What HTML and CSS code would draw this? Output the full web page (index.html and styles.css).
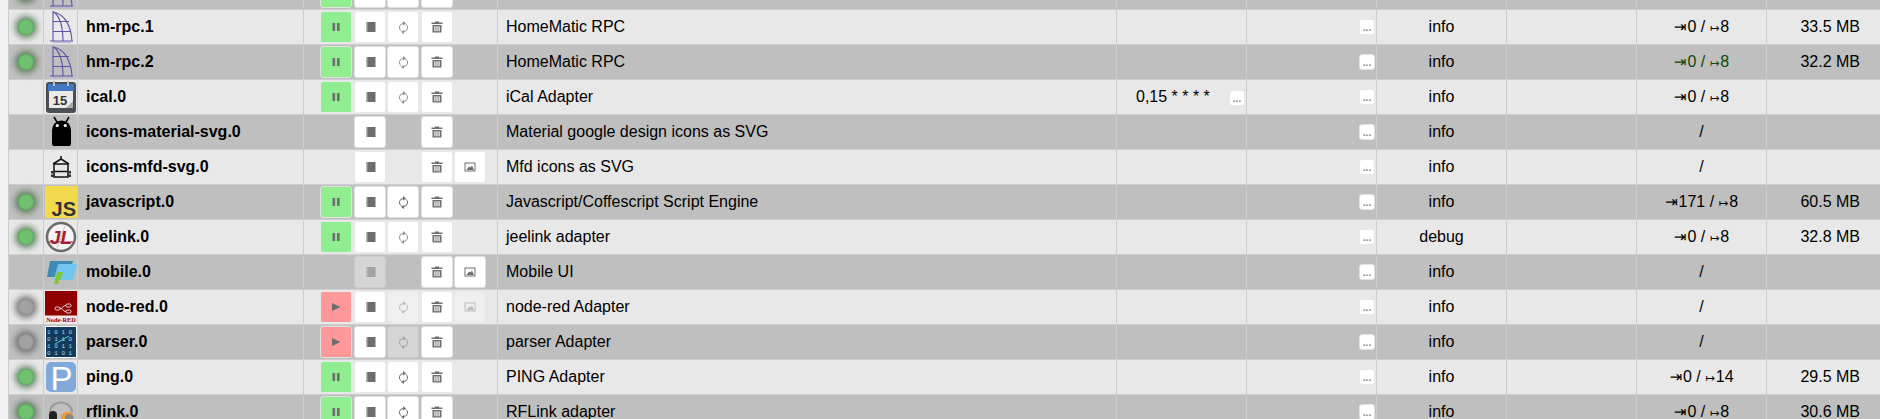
FILE: index.html
```html
<!DOCTYPE html>
<html lang="en">
<head>
<meta charset="utf-8">
<title>Instances</title>
<link rel="stylesheet" href="styles.css">
</head>
<body>
<svg class="defs" width="0" height="0" aria-hidden="true">
  <symbol id="pause" viewBox="0 0 16 16"><path d="M4.500 4h2.600v8H4.500zM9 4h2.600v8H9z"/></symbol>
  <symbol id="play" viewBox="0 0 16 16"><path d="M4 4l8.500 4L4 12z"/></symbol>
  <symbol id="note" viewBox="0 0 16 16"><path d="M5.500 3H13.500v10H5.500zM4 3.500h1.500v1H4zM4 5.500h1.500v1H4zM4 7.500h1.500v1H4zM4 9.500h1.500v1H4zM4 11.500h1.500v1H4z"/></symbol>
  <symbol id="sync" viewBox="0 0 16 16"><path fill="none" stroke="currentColor" stroke-width="1" d="M8 4.500A4 4 0 0 0 6.500 12M9 12.500A4 4 0 0 0 10.500 5"/><path d="M8 2l3 2.500L8 6.500zM9 11l-3 2 3 2z"/></symbol>
  <symbol id="trash" viewBox="0 0 16 16"><path d="M6 2.500h4v1h3.500V5h-11V3.500H6zM3.500 6h9v7.500h-9zM5.300 7.300v5h1.200v-5zM7.400 7.300v5h1.200v-5zM9.500 7.300v5h1.200v-5z" fill-rule="evenodd"/></symbol>
  <symbol id="image" viewBox="0 0 16 16"><path fill-rule="evenodd" d="M2.500 3.500h11v9h-11zM3.500 4.500v7h9v-7z"/><path d="M4.500 11l2.500-3.500 1.500 1L10 6.500l2 4.500z"/></symbol>
  <symbol id="hm" viewBox="0 0 32 32"><g fill="none" stroke="#5b53a8" stroke-width="1.100"><path d="M8 0v30M9 1c6 5 9 14 9 29M8 1c12 2 18 14 19 29M8 10.500h16M8 20.500h18M5 30h23"/></g><path d="M8 31h18v1H8z" fill="#b9b7d8"/></symbol>
  <symbol id="android" viewBox="0 0 32 32"><path d="M7 14a9.500 9.500 0 0 1 19 0v14a2 2 0 0 1-2 2H9a2 2 0 0 1-2-2z"/><path d="M9 1l3 5M24 1l-3 5" stroke="#000" stroke-width="1.500"/><circle cx="12.300" cy="9.500" r="1.600" fill="#fff"/><circle cx="20.300" cy="9.500" r="1.600" fill="#fff"/></symbol>
  <symbol id="mfd" viewBox="0 0 32 32"><path fill="none" stroke="#111" stroke-width="1.500" d="M9 13h14v13H9zM8 13l8-5 8 5M16 5v3M9 20.500h14"/><path d="M6 20h4v2.500H6zM22 20h4v2.500h-4zM6 23.500h4V26H6zM22 23.500h4V26h-4z" fill="#333"/></symbol>
  <symbol id="mobile" viewBox="0 0 32 32"><path fill="#3e8cb4" d="M5 5h23l-3 10-12 1-1 5H2z"/><path fill="#72c5ee" d="M13 8h19l-4 16H9z"/><path fill="#7fc92e" d="M12 16h6l-3 8h-1l-1 4H9l2-7z"/></symbol>
  <symbol id="rflink" viewBox="0 0 32 32"><path fill="none" stroke="#9a9a9a" stroke-width="2" d="M5 17C5 3 27 3 27 17"/><rect x="4" y="15" width="8" height="16" rx="4" fill="#222"/><rect x="16" y="16" width="13" height="15" rx="6" fill="#ee9a33"/><rect x="20" y="18" width="8" height="11" rx="4" fill="#888"/></symbol>
</svg>

<main class="list">

<div class="row">
  <div class="cell"><span class="led on"></span></div>
  <div class="cell icon"><svg class="logo" viewBox="0 0 32 32"><use href="#hm"/></svg></div>
  <div class="cell name">hm-rpc.0</div>
  <div class="cell btns"><button class="b go"><svg class="i"><use href="#pause"/></svg></button><button class="b"><svg class="i"><use href="#note"/></svg></button><button class="b"><svg class="i soft"><use href="#sync"/></svg></button><button class="b"><svg class="i"><use href="#trash"/></svg></button></div>
  <div class="cell text">HomeMatic RPC</div>
  <div class="cell"></div>
  <div class="cell end"><button class="more">...</button></div>
  <div class="cell mid">info</div>
  <div class="cell"></div>
  <div class="cell mid"><span><span class="ar">⇥</span>0 / <span class="ar ar2">↦</span>8</span></div>
  <div class="cell mem">32.9 MB</div>
</div>

<div class="row">
  <div class="cell"><span class="led on"></span></div>
  <div class="cell icon"><svg class="logo" viewBox="0 0 32 32"><use href="#hm"/></svg></div>
  <div class="cell name">hm-rpc.1</div>
  <div class="cell btns"><button class="b go"><svg class="i"><use href="#pause"/></svg></button><button class="b"><svg class="i"><use href="#note"/></svg></button><button class="b"><svg class="i soft"><use href="#sync"/></svg></button><button class="b"><svg class="i"><use href="#trash"/></svg></button></div>
  <div class="cell text">HomeMatic RPC</div>
  <div class="cell"></div>
  <div class="cell end"><button class="more">...</button></div>
  <div class="cell mid">info</div>
  <div class="cell"></div>
  <div class="cell mid"><span><span class="ar">⇥</span>0 / <span class="ar ar2">↦</span>8</span></div>
  <div class="cell mem">33.5 MB</div>
</div>

<div class="row">
  <div class="cell"><span class="led on"></span></div>
  <div class="cell icon"><svg class="logo" viewBox="0 0 32 32"><use href="#hm"/></svg></div>
  <div class="cell name">hm-rpc.2</div>
  <div class="cell btns"><button class="b go"><svg class="i"><use href="#pause"/></svg></button><button class="b"><svg class="i"><use href="#note"/></svg></button><button class="b"><svg class="i soft"><use href="#sync"/></svg></button><button class="b"><svg class="i"><use href="#trash"/></svg></button></div>
  <div class="cell text">HomeMatic RPC</div>
  <div class="cell"></div>
  <div class="cell end"><button class="more">...</button></div>
  <div class="cell mid">info</div>
  <div class="cell"></div>
  <div class="cell mid green"><span><span class="ar">⇥</span>0 / <span class="ar ar2">↦</span>8</span></div>
  <div class="cell mem">32.2 MB</div>
</div>

<div class="row">
  <div class="cell"></div>
  <div class="cell icon"><svg class="logo" viewBox="0 0 32 32"><rect x="1" y="1" width="30" height="31" rx="3" fill="#4a4f55"/><rect x="3" y="3" width="26" height="7" fill="#3f78c4"/><rect x="4" y="10" width="24" height="17" fill="#eceae6"/><path d="M8 0h2v5H8zM22 0h2v5h-2z" fill="#bbb"/><path d="M21 27l7-7v7z" fill="#aaa"/><text x="15" y="24" class="t-cal">15</text></svg></div>
  <div class="cell name">ical.0</div>
  <div class="cell btns"><button class="b go"><svg class="i"><use href="#pause"/></svg></button><button class="b"><svg class="i"><use href="#note"/></svg></button><button class="b"><svg class="i soft"><use href="#sync"/></svg></button><button class="b"><svg class="i"><use href="#trash"/></svg></button></div>
  <div class="cell text">iCal Adapter</div>
  <div class="cell cron"><span>0,15 * * * *</span><button class="more">...</button></div>
  <div class="cell end"><button class="more">...</button></div>
  <div class="cell mid">info</div>
  <div class="cell"></div>
  <div class="cell mid"><span><span class="ar">⇥</span>0 / <span class="ar ar2">↦</span>8</span></div>
  <div class="cell mem"></div>
</div>

<div class="row">
  <div class="cell"></div>
  <div class="cell icon"><svg class="logo" viewBox="0 0 32 32"><use href="#android"/></svg></div>
  <div class="cell name">icons-material-svg.0</div>
  <div class="cell btns"><span class="gap"></span><button class="b"><svg class="i"><use href="#note"/></svg></button><span class="gap"></span><button class="b"><svg class="i"><use href="#trash"/></svg></button></div>
  <div class="cell text">Material google design icons as SVG</div>
  <div class="cell"></div>
  <div class="cell end"><button class="more">...</button></div>
  <div class="cell mid">info</div>
  <div class="cell"></div>
  <div class="cell mid">/</div>
  <div class="cell mem"></div>
</div>

<div class="row">
  <div class="cell"></div>
  <div class="cell icon"><svg class="logo" viewBox="0 0 32 32"><use href="#mfd"/></svg></div>
  <div class="cell name">icons-mfd-svg.0</div>
  <div class="cell btns"><span class="gap"></span><button class="b"><svg class="i"><use href="#note"/></svg></button><span class="gap"></span><button class="b"><svg class="i"><use href="#trash"/></svg></button><button class="b"><svg class="i"><use href="#image"/></svg></button></div>
  <div class="cell text">Mfd icons as SVG</div>
  <div class="cell"></div>
  <div class="cell end"><button class="more">...</button></div>
  <div class="cell mid">info</div>
  <div class="cell"></div>
  <div class="cell mid">/</div>
  <div class="cell mem"></div>
</div>

<div class="row">
  <div class="cell"><span class="led on"></span></div>
  <div class="cell icon"><svg class="logo" viewBox="0 0 32 32"><path fill="#f3d94e" d="M0 0h32v32H0z"/><text x="31" y="30" class="t-js">JS</text></svg></div>
  <div class="cell name">javascript.0</div>
  <div class="cell btns"><button class="b go"><svg class="i"><use href="#pause"/></svg></button><button class="b"><svg class="i"><use href="#note"/></svg></button><button class="b"><svg class="i"><use href="#sync"/></svg></button><button class="b"><svg class="i"><use href="#trash"/></svg></button></div>
  <div class="cell text">Javascript/Coffescript Script Engine</div>
  <div class="cell"></div>
  <div class="cell end"><button class="more">...</button></div>
  <div class="cell mid">info</div>
  <div class="cell"></div>
  <div class="cell mid"><span><span class="ar">⇥</span>171 / <span class="ar ar2">↦</span>8</span></div>
  <div class="cell mem">60.5 MB</div>
</div>

<div class="row">
  <div class="cell"><span class="led on"></span></div>
  <div class="cell icon"><svg class="logo" viewBox="0 0 32 32"><circle cx="16" cy="16" r="14" fill="#f4f4f4" stroke="#6b6b6b" stroke-width="2.500"/><path d="M4 21h24" stroke="#9a2030" stroke-width="1"/><path d="M12 27L20 5" stroke="#bbb" stroke-width=".8"/><text x="16" y="23" class="t-jl">JL</text></svg></div>
  <div class="cell name">jeelink.0</div>
  <div class="cell btns"><button class="b go"><svg class="i"><use href="#pause"/></svg></button><button class="b"><svg class="i"><use href="#note"/></svg></button><button class="b"><svg class="i soft"><use href="#sync"/></svg></button><button class="b"><svg class="i"><use href="#trash"/></svg></button></div>
  <div class="cell text">jeelink adapter</div>
  <div class="cell"></div>
  <div class="cell end"><button class="more">...</button></div>
  <div class="cell mid">debug</div>
  <div class="cell"></div>
  <div class="cell mid"><span><span class="ar">⇥</span>0 / <span class="ar ar2">↦</span>8</span></div>
  <div class="cell mem">32.8 MB</div>
</div>

<div class="row">
  <div class="cell"></div>
  <div class="cell icon"><svg class="logo" viewBox="0 0 32 32"><use href="#mobile"/></svg></div>
  <div class="cell name">mobile.0</div>
  <div class="cell btns"><span class="gap"></span><button class="b off"><svg class="i"><use href="#note"/></svg></button><span class="gap"></span><button class="b"><svg class="i"><use href="#trash"/></svg></button><button class="b"><svg class="i"><use href="#image"/></svg></button></div>
  <div class="cell text">Mobile UI</div>
  <div class="cell"></div>
  <div class="cell end"><button class="more">...</button></div>
  <div class="cell mid">info</div>
  <div class="cell"></div>
  <div class="cell mid">/</div>
  <div class="cell mem"></div>
</div>

<div class="row">
  <div class="cell"><span class="led"></span></div>
  <div class="cell icon"><svg class="logo" viewBox="0 0 32 32"><path fill="#8f0000" d="M0 0h32v32H0z"/><path fill="#f3e6e6" d="M0 24.500h32V32H0z"/><g fill="none" stroke="#fff" stroke-width=".8"><rect x="10" y="16" width="5" height="3" rx="1.200"/><rect x="21" y="13" width="5" height="3" rx="1.200"/><rect x="21" y="19" width="5" height="3" rx="1.200"/><path d="M15 17.500c4 0 2-3 6-3M15 17.500c4 0 2 3 6 3"/></g><text x="16" y="30.500" class="t-nr">Node-RED</text></svg></div>
  <div class="cell name">node-red.0</div>
  <div class="cell btns"><button class="b stop"><svg class="i"><use href="#play"/></svg></button><button class="b"><svg class="i"><use href="#note"/></svg></button><button class="b off"><svg class="i"><use href="#sync"/></svg></button><button class="b"><svg class="i"><use href="#trash"/></svg></button><button class="b off"><svg class="i"><use href="#image"/></svg></button></div>
  <div class="cell text">node-red Adapter</div>
  <div class="cell"></div>
  <div class="cell end"><button class="more">...</button></div>
  <div class="cell mid">info</div>
  <div class="cell"></div>
  <div class="cell mid">/</div>
  <div class="cell mem"></div>
</div>

<div class="row">
  <div class="cell"><span class="led"></span></div>
  <div class="cell icon"><svg class="logo" viewBox="0 0 32 32"><path fill="#123a5c" stroke="#fff" d="M.5.500h31v31H.5z"/><text x="2" y="8" class="t-bin">1 0 1 0 0</text><text x="2" y="15" class="t-bin">0 1 1 0 1</text><text x="2" y="22" class="t-bin">1 0 1 1 0</text><text x="2" y="29" class="t-bin">0 1 0 1 1</text><path d="M10 18l14-8" stroke="#4fd6d0" stroke-width="1"/></svg></div>
  <div class="cell name">parser.0</div>
  <div class="cell btns"><button class="b stop"><svg class="i"><use href="#play"/></svg></button><button class="b"><svg class="i"><use href="#note"/></svg></button><button class="b off"><svg class="i"><use href="#sync"/></svg></button><button class="b"><svg class="i"><use href="#trash"/></svg></button></div>
  <div class="cell text">parser Adapter</div>
  <div class="cell"></div>
  <div class="cell end"><button class="more">...</button></div>
  <div class="cell mid">info</div>
  <div class="cell"></div>
  <div class="cell mid">/</div>
  <div class="cell mem"></div>
</div>

<div class="row">
  <div class="cell"><span class="led on"></span></div>
  <div class="cell icon"><svg class="logo" viewBox="0 0 32 32"><rect x="1" y="1" width="30" height="30" rx="5" fill="#82a9db"/><text x="5.500" y="29" class="t-p">P</text></svg></div>
  <div class="cell name">ping.0</div>
  <div class="cell btns"><button class="b go"><svg class="i"><use href="#pause"/></svg></button><button class="b"><svg class="i"><use href="#note"/></svg></button><button class="b"><svg class="i"><use href="#sync"/></svg></button><button class="b"><svg class="i"><use href="#trash"/></svg></button></div>
  <div class="cell text">PING Adapter</div>
  <div class="cell"></div>
  <div class="cell end"><button class="more">...</button></div>
  <div class="cell mid">info</div>
  <div class="cell"></div>
  <div class="cell mid"><span><span class="ar">⇥</span>0 / <span class="ar ar2">↦</span>14</span></div>
  <div class="cell mem">29.5 MB</div>
</div>

<div class="row">
  <div class="cell"><span class="led on"></span></div>
  <div class="cell icon"><svg class="logo" viewBox="0 0 32 32"><use href="#rflink"/></svg></div>
  <div class="cell name">rflink.0</div>
  <div class="cell btns"><button class="b go"><svg class="i"><use href="#pause"/></svg></button><button class="b"><svg class="i"><use href="#note"/></svg></button><button class="b"><svg class="i"><use href="#sync"/></svg></button><button class="b"><svg class="i"><use href="#trash"/></svg></button></div>
  <div class="cell text">RFLink adapter</div>
  <div class="cell"></div>
  <div class="cell end"><button class="more">...</button></div>
  <div class="cell mid">info</div>
  <div class="cell"></div>
  <div class="cell mid"><span><span class="ar">⇥</span>0 / <span class="ar ar2">↦</span>8</span></div>
  <div class="cell mem">30.6 MB</div>
</div>

</main>
</body>
</html>
```

FILE: styles.css
```css
html, body {
  margin: 0;
  height: 419px;
  overflow: hidden;
  background: #f2f2f2;
}
body {
  padding-left: 8px;
  font-family: "Liberation Sans", Arial, sans-serif;
  font-size: 16px;
  color: #000;
}
.defs {
  display: block;
  height: 0;
}
/* the list is scrolled: its first row is cut by the top of the window */
.list {
  margin-top: -25px;
  border-left: 1px solid #ccc;
}
.row {
  display: grid;
  grid-template-columns: 35px 34px 226px 194px 619px 130px 130px 130px 130px 130px 114px;
  height: 35px;
  box-sizing: border-box;
  border-bottom: 1px solid #cfcfcf;
  background: #e8e8e8;
}
.row:nth-child(odd) {
  background: #bfbfbf;
}
.cell {
  display: flex;
  align-items: center;
  box-sizing: border-box;
  border-right: 1px solid #ccc;
  min-width: 0;
  white-space: nowrap;
}
.cell:first-child {
  justify-content: center;
}
.cell:last-child {
  border-right: 0;
}
.icon {
  padding-left: 1px;
  align-items: flex-start;
  padding-top: 1px;
}
.logo {
  display: block;
  flex: none;
  width: 32px;
  height: 32px;
}
.name {
  padding-left: 8px;
  font-weight: bold;
}
.btns {
  padding-left: 16px;
  gap: 1.5px;
}
.text {
  padding-left: 8px;
}
.mid {
  justify-content: center;
}
.end {
  justify-content: flex-end;
  align-items: flex-start;
  padding: 9px 1px 0 0;
}
.cron {
  justify-content: space-between;
  padding: 0 1px 0 19px;
}
.cron .more {
  margin-top: 2px;
}
.mem {
  justify-content: flex-end;
  padding-right: 21px;
}
.green {
  color: #0b4a0b;
}
.ar {
  font-family: "DejaVu Sans", sans-serif;
  font-size: 15px;
  margin-right: 1px;
}
.ar2 {
  font-size: 11.5px;
}
.led {
  display: block;
  width: 16px;
  height: 16px;
  border-radius: 50%;
  background: #a2a2a2;
  box-shadow: 0 0 6px 3px rgba(95, 95, 95, .8), inset 0 0 2px rgba(90, 90, 90, .6);
}
.led.on {
  background: #6fc16f;
  box-shadow: 0 0 6px 3px rgba(70, 110, 70, .8), inset 0 0 2px rgba(50, 110, 50, .6);
}
.b {
  display: flex;
  align-items: center;
  justify-content: center;
  flex: none;
  width: 32px;
  height: 32px;
  padding: 0;
  box-sizing: border-box;
  border: 1px solid #e2e2e2;
  border-radius: 3px;
  background: #fff;
  color: #6e6e6e;
}
.row:nth-child(even) .b {
  border-color: #e8e8e8;
}
.gap {
  flex: none;
  width: 32px;
}
.go {
  background: #90ee90;
}
.stop {
  background: #ff9999;
}
.b.off {
  opacity: .35;
}
.i {
  display: block;
  width: 16px;
  height: 16px;
  fill: currentColor;
}
.i.soft {
  opacity: .75;
}
.more {
  display: block;
  flex: none;
  width: 16px;
  height: 16px;
  padding: 0;
  box-sizing: border-box;
  border: 1px solid #e2e2e2;
  border-radius: 3px;
  background: #fff;
  color: #8a8a8a;
  font: bold 10px/16px "Liberation Sans", sans-serif;
}
.row:nth-child(even) .more {
  border-color: #e8e8e8;
}
.t-cal {
  font: bold 13px "Liberation Sans", sans-serif;
  fill: #333;
  text-anchor: middle;
}
.t-js {
  font: bold 20px "Liberation Sans", sans-serif;
  fill: #333;
  text-anchor: end;
}
.t-jl {
  font: italic bold 19px "Liberation Sans", sans-serif;
  fill: #a8202f;
  text-anchor: middle;
}
.t-nr {
  font: bold 6.300px "Liberation Serif", serif;
  fill: #8f0000;
  text-anchor: middle;
}
.t-bin {
  font: 6px "Liberation Mono", monospace;
  fill: #a6d8ea;
}
.t-p {
  font: 33px "Liberation Sans", sans-serif;
  fill: #fff;
}
```
